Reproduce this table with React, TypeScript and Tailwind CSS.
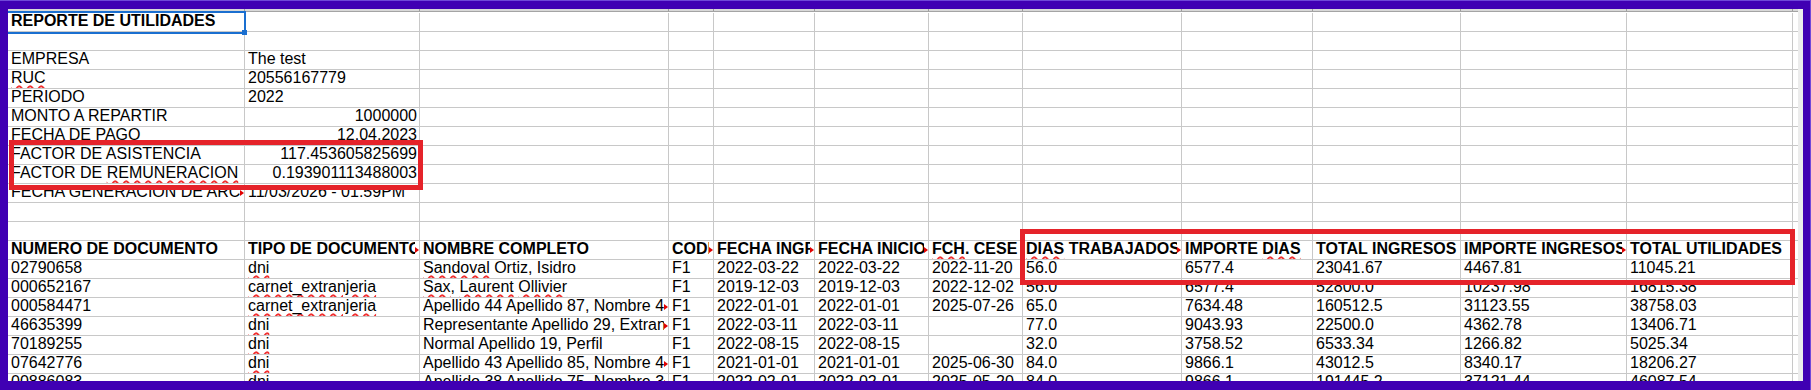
import React from "react";

const cw = [
  "w-[237px]",
  "w-[175px]",
  "w-[249px]",
  "w-[45px]",
  "w-[101px]",
  "w-[114px]",
  "w-[94px]",
  "w-[159px]",
  "w-[131px]",
  "w-[148px]",
  "w-[166px]",
  "w-[166px]",
];

type C = { t?: React.ReactNode; r?: boolean; b?: boolean; a?: boolean };

function W({ children }: { children: React.ReactNode }) {
  return (
    <span className="underline decoration-wavy decoration-[#f03030] decoration-[1.5px] underline-offset-[2px]">
      {children}
    </span>
  );
}

function Cell({ w, c }: { w: string; c?: C }) {
  return (
    <div
      className={`${w} relative h-full shrink-0 overflow-hidden whitespace-nowrap border-r border-[#c8c8c8] pl-[3px] pr-[2px] leading-[16px] ${
        c?.r ? "text-right" : "text-left"
      } ${c?.b ? "font-bold" : "font-normal"}`}
    >
      {c?.a ? (
        <div className="mr-[2px] overflow-hidden pb-[2px]">{c.t}</div>
      ) : (
        c?.t
      )}
      {c?.a && (
        <span className="absolute right-0 top-[6px] h-0 w-0 border-y-[3px] border-l-[4px] border-y-transparent border-l-[#e00000]" />
      )}
    </div>
  );
}

function Row({ cells, first }: { cells: C[]; first?: boolean }) {
  return (
    <div
      className={`flex shrink-0 border-b border-[#c8c8c8] ${
        first ? "h-[20px] pt-[1px]" : "h-[19px]"
      }`}
    >
      {cw.map((w, i) => (
        <Cell key={i} w={w} c={cells[i]} />
      ))}
      <div className="h-full flex-1" />
    </div>
  );
}

const top: C[][] = [
  [{ t: "REPORTE DE UTILIDADES", b: true }],
  [],
  [{ t: "EMPRESA" }, { t: "The test" }],
  [{ t: <W>RUC</W> }, { t: "20556167779" }],
  [{ t: "PERIODO" }, { t: "2022" }],
  [{ t: "MONTO A REPARTIR" }, { t: "1000000", r: true }],
  [{ t: "FECHA DE PAGO" }, { t: "12.04.2023", r: true }],
  [{ t: "FACTOR DE ASISTENCIA" }, { t: "117.453605825699", r: true }],
  [
    {
      t: (
        <>
          FACTOR DE <W>REMUNERACION</W>
        </>
      ),
    },
    { t: "0.193901113488003", r: true },
  ],
  [{ t: "FECHA GENERACION DE ARCHIVO", a: true }, { t: "11/03/2026 - 01:59PM" }],
  [],
  [],
  [
    { t: "NUMERO DE DOCUMENTO", b: true },
    { t: "TIPO DE DOCUMENTO", b: true, a: true },
    { t: "NOMBRE COMPLETO", b: true },
    { t: "CODIGO", b: true, a: true },
    { t: "FECHA INGRESO", b: true, a: true },
    { t: "FECHA INICIO PERIODO", b: true, a: true },
    {
      t: (
        <>
          <W>FCH</W>. CESE
        </>
      ),
      b: true,
    },
    {
      t: (
        <>
          <W>DIAS</W> TRABAJADOS
        </>
      ),
      b: true,
      a: true,
    },
    {
      t: (
        <>
          IMPORTE <W>DIAS</W>
        </>
      ),
      b: true,
    },
    { t: "TOTAL INGRESOS", b: true },
    { t: "IMPORTE INGRESOS", b: true, a: true },
    { t: "TOTAL UTILIDADES", b: true },
  ],
];

const data: (string | React.ReactNode)[][] = [
  ["02790658", <W>dni</W>, <><W>Sandoval</W> Ortiz, Isidro</>, "F1", "2022-03-22", "2022-03-22", "2022-11-20", "56.0", "6577.4", "23041.67", "4467.81", "11045.21"],
  ["000652167", <W>carnet_extranjeria</W>, <><W>Sax</W>, <W>Laurent</W> <W>Ollivier</W></>, "F1", "2019-12-03", "2019-12-03", "2022-12-02", "56.0", "6577.4", "52800.0", "10237.98", "16815.38"],
  ["000584471", <W>carnet_extranjeria</W>, "Apellido 44 Apellido 87, Nombre 44", "F1", "2022-01-01", "2022-01-01", "2025-07-26", "65.0", "7634.48", "160512.5", "31123.55", "38758.03"],
  ["46635399", <W>dni</W>, "Representante Apellido 29, Extranjero", "F1", "2022-03-11", "2022-03-11", "", "77.0", "9043.93", "22500.0", "4362.78", "13406.71"],
  ["70189255", <W>dni</W>, "Normal Apellido 19, Perfil", "F1", "2022-08-15", "2022-08-15", "", "32.0", "3758.52", "6533.34", "1266.82", "5025.34"],
  ["07642776", <W>dni</W>, "Apellido 43 Apellido 85, Nombre 43", "F1", "2021-01-01", "2021-01-01", "2025-06-30", "84.0", "9866.1", "43012.5", "8340.17", "18206.27"],
  ["00886083", <W>dni</W>, "Apellido 38 Apellido 75, Nombre 38", "F1", "2022-02-01", "2022-02-01", "2025-05-20", "84.0", "9866.1", "191445.2", "37121.44", "46087.54"],
];

const arrowsC = [false, false, true, true, false, true, true];

export default function App() {
  return (
    <div className="relative h-[390px] w-[1811px] overflow-hidden border-r border-t border-[#7048d8] bg-[#4000b3] pb-[9px] pl-[8px] pr-[7px] pt-[8px] font-['Liberation_Sans',Arial,sans-serif] text-[16px] text-black">
      <div className="flex h-full">
        <div className="flex min-w-0 flex-1 flex-col">
          {/* column header remnant */}
          <div className="flex h-[3px] shrink-0 border-b border-[#a4a4a4] bg-[#d8d8d8]">
            {cw.map((w, i) => (
              <div key={i} className={`${w} h-full shrink-0 border-r border-[#9c9c9c]`} />
            ))}
            <div className="h-full flex-1" />
          </div>
          <div className="flex flex-1 flex-col overflow-hidden bg-white">
            {top.map((cells, i) => (
              <Row key={i} cells={cells} first={i === 0} />
            ))}
            {data.map((row, i) => (
              <Row
                key={`d${i}`}
                cells={row.map((t, j) => ({ t, a: j === 2 && arrowsC[i] }))}
              />
            ))}
          </div>
        </div>
        <div className="h-full w-[5px] shrink-0 bg-[#ececec]" />
      </div>

      {/* cell selection A1 */}
      <div className="pointer-events-none absolute left-[8px] top-[10px] h-[23px] w-[238px] border-b-2 border-r-2 border-t-2 border-[#1a6fd0]" />
      <div className="pointer-events-none absolute left-[242px] top-[29px] h-[5px] w-[5px] bg-[#1a6fd0]" />

      {/* red annotation boxes */}
      <div className="pointer-events-none absolute left-[9px] top-[139px] h-[50px] w-[414px] border-[5px] border-[#e5232a]" />
      <div className="pointer-events-none absolute left-[1020px] top-[228px] h-[56px] w-[775px] border-[5px] border-[#e5232a]" />
    </div>
  );
}
